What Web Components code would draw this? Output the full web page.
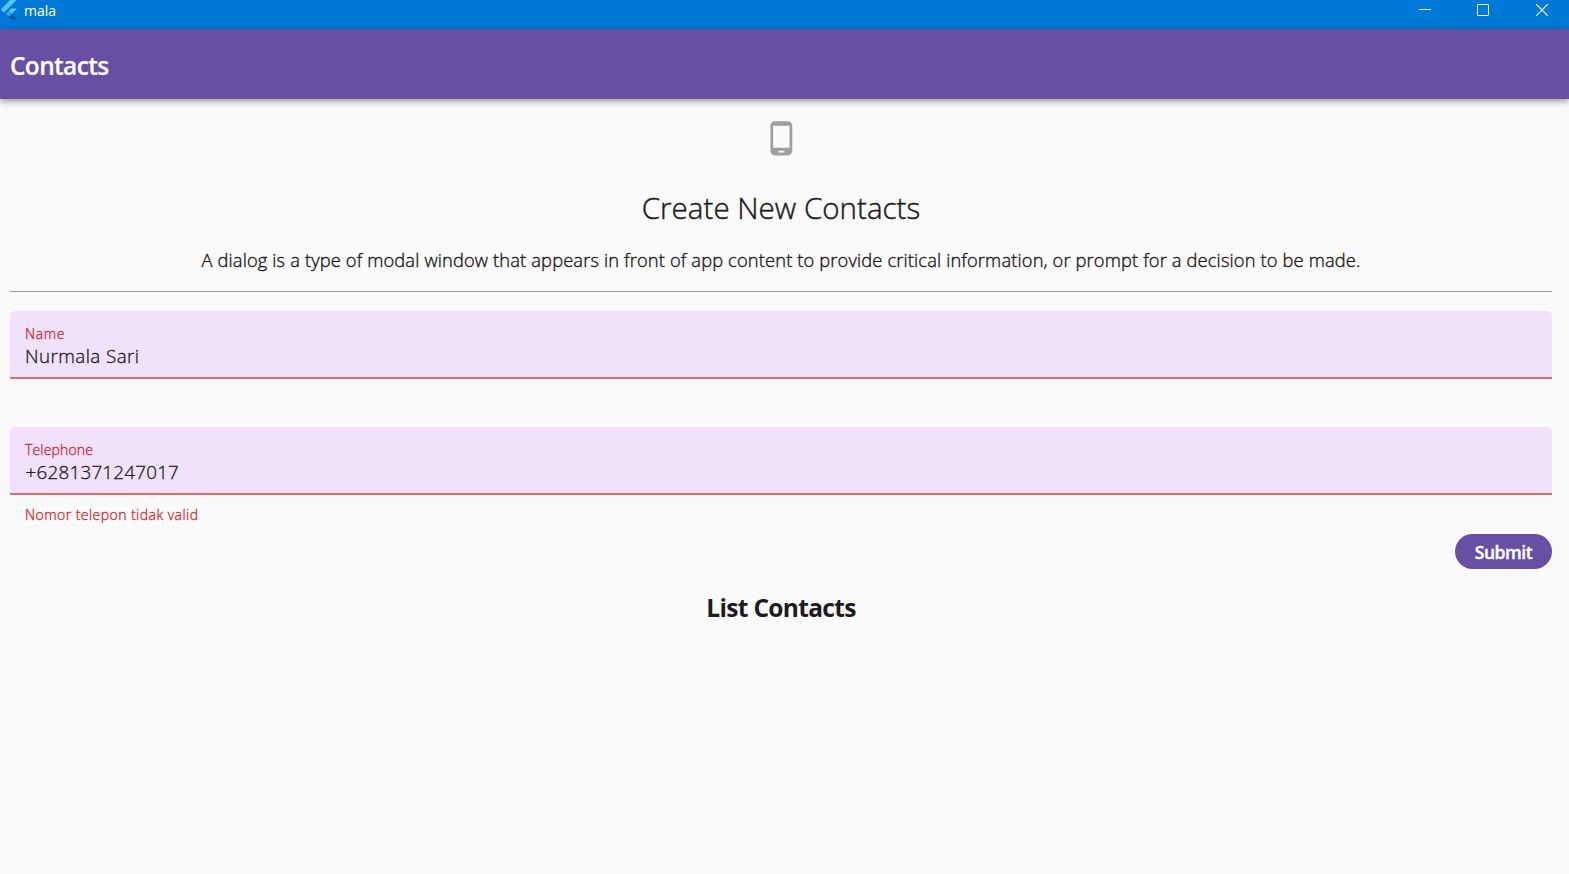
<!DOCTYPE html>
<html lang="id">
<head>
<meta charset="utf-8">
<title>mala</title>
<style>
html,body{margin:0;height:100%;background:#fafafa;overflow:hidden}
body{font-family:"Open Sans","Noto Sans",sans-serif;color:#1d1b20}
</style>
</head>
<body>
<contacts-app></contacts-app>
<script>
// One line of text, tracked so that it fills the given width.
class TextLine extends HTMLElement {
  constructor(){
    super();
    this.attachShadow({mode:'open'}).innerHTML = `<style>
      :host{display:block;white-space:nowrap;width:max-content}
      span{display:inline-block}
    </style><span><slot></slot></span>`;
  }
  connectedCallback(){
    const want = parseFloat(this.getAttribute('width'));
    const span = this.shadowRoot.querySelector('span');
    const n = this.textContent.length;
    const natural = span.getBoundingClientRect().width;
    if (want && natural) {
      span.style.letterSpacing = ((want - natural) / n) + 'px';
    }
  }
}

class WindowBar extends HTMLElement {
  constructor(){
    super();
    this.attachShadow({mode:'open'}).innerHTML = `<style>
      :host{display:flex;height:29px;background:#0078d7;color:#fff;font-size:14px;line-height:22px;align-items:flex-start}
      .logo{width:24px;height:22px;flex:none}
      .space{flex:1}
      .btns{display:flex;width:174px}
      .btns svg{display:block;width:58px;height:22px}
    </style>
    <svg class="logo" viewBox="0 0 24 22">
      <path d="M10 0 .8 9.4 4 12.6 16.6 0z" fill="#54c5f8"/>
      <path d="M11 8.6H17L11.8 13.8 8.6 11z" fill="#54c5f8"/>
      <path d="M5.8 13.8 8.8 10.8 11.8 13.8 8.8 16.8z" fill="#29a8e8"/>
      <path d="M8.8 16.8 11.8 13.8 17 19V19.6H11.4z" fill="#01579b"/>
    </svg>
    <slot></slot><div class="space"></div>
    <div class="btns">
      <svg viewBox="0 0 58 22"><path d="M24 9.5h12" stroke="#fff"/></svg>
      <svg viewBox="0 0 58 22"><rect x="24.5" y="4.5" width="11" height="11" rx=".6" fill="none" stroke="#fff"/></svg>
      <svg viewBox="0 0 58 22"><path d="M25.2 4.2 36.8 15.8M36.8 4.2 25.2 15.8" stroke="#fff" stroke-width="1.1"/></svg>
    </div>`;
  }
}

class AppHeader extends HTMLElement {
  constructor(){
    super();
    this.attachShadow({mode:'open'}).innerHTML = `<style>
      :host{display:flex;align-items:center;height:70px;box-sizing:border-box;padding:3px 10px 0;background:#6750a4;color:#fff;
        font-size:24.5px;font-weight:600;line-height:34px;position:relative;
        -webkit-text-stroke:.2px currentColor;
        box-shadow:0 2px 5px rgba(0,0,0,.24),0 5px 6px rgba(0,0,0,.09),0 1px 10px rgba(0,0,0,.08)}
    </style><slot></slot>`;
  }
}

class PhoneIcon extends HTMLElement {
  constructor(){
    super();
    this.attachShadow({mode:'open'}).innerHTML = `<style>
      :host{display:block;width:38px;height:38px}svg{display:block}
    </style><svg width="38" height="38" viewBox="0 0 38 38" fill="#9e9e9e"><path transform="translate(.6 .6) scale(1.5625)" d="M16 1H8C6.34 1 5 2.34 5 4v16c0 1.66 1.34 3 3 3h8c1.66 0 3-1.34 3-3V4c0-1.66-1.34-3-3-3zm-2 20h-4v-1h4v1zm3.25-3H6.75V4h10.5v14z"/></svg>`;
  }
}

class FilledField extends HTMLElement {
  constructor(){
    super();
    this.attachShadow({mode:'open'}).innerHTML = `<style>
      :host{display:block}
      .box{height:68px;box-sizing:border-box;background:#f0e2fb;border-radius:5px 5px 0 0;padding:13px 15px 0;
        border-bottom:2px solid #df6c72}
      .label{color:#d32730;font-size:14px;line-height:20px}
      .value{font-size:18.8px;line-height:25px}
      .help{color:#d32730;font-size:14px;line-height:20px;padding:10px 15px 0;height:20px}
    </style>
    <div class="box"><div class="label"><slot name="label"></slot></div>
    <div class="value"><slot></slot></div></div>
    <div class="help"><slot name="error"></slot></div>`;
  }
}

class PillButton extends HTMLElement {
  constructor(){
    super();
    this.attachShadow({mode:'open'}).innerHTML = `<style>
      :host{display:flex;align-items:center;justify-content:center;width:97px;height:35px;border-radius:17.5px;
        background:#6750a4;color:#fff;font-size:17.5px;font-weight:600;line-height:24px;-webkit-text-stroke:.4px currentColor}
    </style><slot></slot>`;
  }
}

class ContactsApp extends HTMLElement {
  constructor(){
    super();
    this.attachShadow({mode:'open'}).innerHTML = `<style>
      :host{display:block;height:874px;background:#fafafa}
      main{display:flex;flex-direction:column;align-items:center;padding:20px 17px 0 10px}
      .head{font-size:29.5px;line-height:40px;margin-top:31px;font-weight:300;-webkit-text-stroke:.45px currentColor}
      .desc{font-size:18.3px;line-height:26px;margin-top:19px;font-weight:300;-webkit-text-stroke:.38px currentColor}
      .rule{align-self:stretch;height:1px;background:#9c9c9c;margin-top:18px}
      filled-field{align-self:stretch;font-weight:300;-webkit-text-stroke:.32px currentColor}
      .f1{margin-top:19px}.f2{margin-top:18px}
      .num{margin-left:.6px}
      pill-button{align-self:flex-end;margin-top:9px}
      .list{font-size:24.5px;line-height:34px;font-weight:700;margin-top:22px}
    </style>
    <window-bar><text-line width="32">mala</text-line></window-bar>
    <app-header><text-line width="98.5">Contacts</text-line></app-header>
    <main>
      <phone-icon></phone-icon>
      <text-line class="head" width="278.5">Create New Contacts</text-line>
      <text-line class="desc" width="1159">A dialog is a type of modal window that appears in front of app content to provide critical information, or prompt for a decision to be made.</text-line>
      <div class="rule"></div>
      <filled-field class="f1"><text-line slot="label" width="40">Name</text-line><text-line width="114.5">Nurmala Sari</text-line></filled-field>
      <filled-field class="f2"><text-line slot="label" width="68">Telephone</text-line><text-line class="num" width="153.5">+6281371247017</text-line><text-line slot="error" width="173.5">Nomor telepon tidak valid</text-line></filled-field>
      <pill-button><text-line width="57.5">Submit</text-line></pill-button>
      <text-line class="list" width="149.5">List Contacts</text-line>
    </main>`;
  }
}
customElements.define('window-bar', WindowBar);
customElements.define('app-header', AppHeader);
customElements.define('phone-icon', PhoneIcon);
customElements.define('filled-field', FilledField);
customElements.define('pill-button', PillButton);
customElements.define('contacts-app', ContactsApp);
customElements.define('text-line', TextLine);
</script>
</body>
</html>
